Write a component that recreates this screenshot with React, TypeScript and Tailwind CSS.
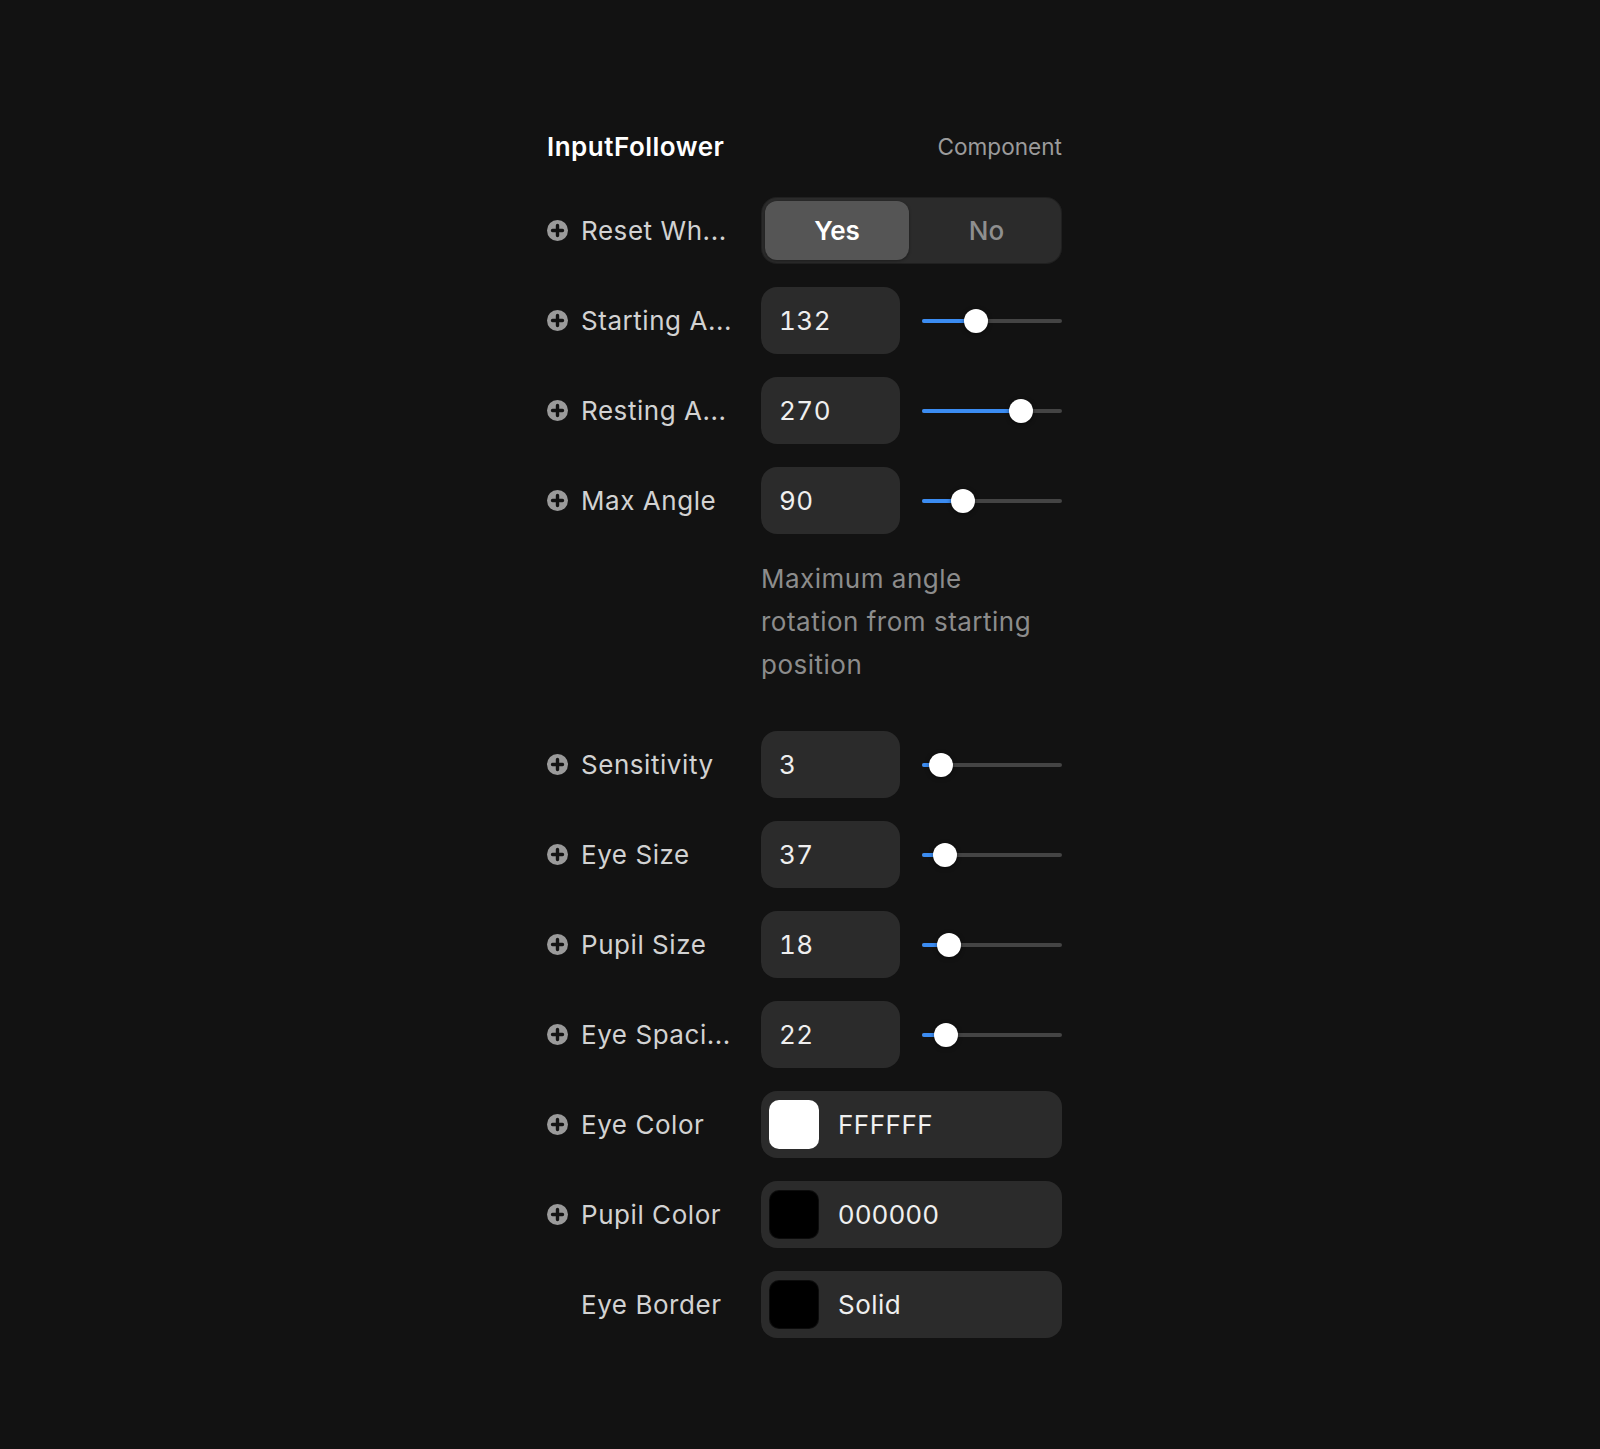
import React from "react"

const font = { fontFamily: "Inter, 'Noto Sans', sans-serif" }

function PlusIcon() {
  return (
    <svg width="21" height="21" viewBox="0 0 21 21" className="shrink-0">
      <circle cx="10.5" cy="10.5" r="10.5" fill="#9a9a9a" />
      <path d="M10.5 5.5v10M5.5 10.5h10" stroke="#121212" strokeWidth="3.4" strokeLinecap="round" />
    </svg>
  )
}

function Label({ text, icon = true }: { text: string; icon?: boolean }) {
  return (
    <div className="w-[214px] shrink-0 flex items-center gap-[13px]">
      {icon ? <PlusIcon /> : <div className="w-[21px] shrink-0" />}
      <span className="text-[26px] leading-[32px] tracking-[0.55px] text-[#d2d2d2] whitespace-nowrap">{text}</span>
    </div>
  )
}

function Slider({ pos }: { pos: number }) {
  // pos: knob centre as fraction of the travel
  const left = 11.5 + pos * 117
  return (
    <div className="relative flex-1 h-[24px] ml-[22px]">
      <div className="absolute left-0 right-0 top-[10px] h-[4px] rounded-full bg-[#444444]" />
      <div className="absolute left-0 top-[10px] h-[4px] rounded-full bg-[#3b8cf2]" style={{ width: left }} />
      <div
        className="absolute top-0 w-[24px] h-[24px] rounded-full bg-white shadow-[0_1px_4px_rgba(0,0,0,0.5)]"
        style={{ left: left - 12 }}
      />
    </div>
  )
}

function NumberRow({ label, value, pos }: { label: string; value: string; pos: number }) {
  return (
    <div className="flex items-center h-[67px]">
      <Label text={label} />
      <div className="w-[301px] flex items-center">
        <div className="w-[139px] h-[67px] rounded-[16px] bg-[#2b2b2b] flex items-center pl-[18px] text-[26px] tracking-[0.5px] tabular-nums text-[#efefef]">
          {value}
        </div>
        <Slider pos={pos} />
      </div>
    </div>
  )
}

function ColorRow({ label, swatch, value, icon = true }: { label: string; swatch: string; value: string; icon?: boolean }) {
  return (
    <div className="flex items-center h-[67px]">
      <Label text={label} icon={icon} />
      <div className="w-[301px] h-[67px] rounded-[16px] bg-[#2b2b2b] flex items-center pl-[8px] gap-[19px]">
        <div className={`w-[50px] h-[49px] rounded-[10px] border border-white/5 ${swatch}`} />
        <span className="text-[26px] tracking-[0.5px] text-[#efefef]">{value}</span>
      </div>
    </div>
  )
}

export default function App() {
  return (
    <div className="min-h-[1449px] bg-[#121212]" style={font}>
      <div className="pt-[131px] pl-[547px]">
        <div className="w-[515px] flex flex-col gap-[23px]">
          <div className="flex items-center justify-between h-[32px] mb-[11px]">
            <span className="text-[26px] leading-[32px] tracking-[0.5px] font-semibold text-white">InputFollower</span>
            <span className="text-[22.6px] text-[#9b9b9b]">Component</span>
          </div>

          <div className="flex items-center h-[67px]">
            <Label text="Reset Wh..." />
            <div className="w-[301px] h-[67px] rounded-[16px] bg-[#2b2b2b] p-[4px] flex shadow-[inset_0_0_0_1px_rgba(0,0,0,0.25)]">
              <div className="w-[144px] rounded-[12px] bg-[#555555] flex items-center justify-center text-[26px] font-semibold text-white shadow-[0_1px_3px_rgba(0,0,0,0.35)]">
                Yes
              </div>
              <div className="flex-1 flex items-center justify-center pl-[6px] text-[26px] font-medium text-[#8f8f8f]">No</div>
            </div>
          </div>

          <NumberRow label="Starting A..." value="132" pos={132 / 360} />
          <NumberRow label="Resting A..." value="270" pos={270 / 360} />
          <NumberRow label="Max Angle" value="90" pos={90 / 360} />

          <div className="pl-[214px] pb-[22px]">
            <p className="w-[301px] text-[26px] leading-[43px] tracking-[0.5px] text-[#8c8c8c]">
              Maximum angle rotation from starting position
            </p>
          </div>

          <NumberRow label="Sensitivity" value="3" pos={0.064} />
          <NumberRow label="Eye Size" value="37" pos={0.098} />
          <NumberRow label="Pupil Size" value="18" pos={0.13} />
          <NumberRow label="Eye Spaci..." value="22" pos={0.107} />

          <ColorRow label="Eye Color" swatch="bg-white" value="FFFFFF" />
          <ColorRow label="Pupil Color" swatch="bg-black" value="000000" />
          <ColorRow label="Eye Border" swatch="bg-black" value="Solid" icon={false} />
        </div>
      </div>
    </div>
  )
}
